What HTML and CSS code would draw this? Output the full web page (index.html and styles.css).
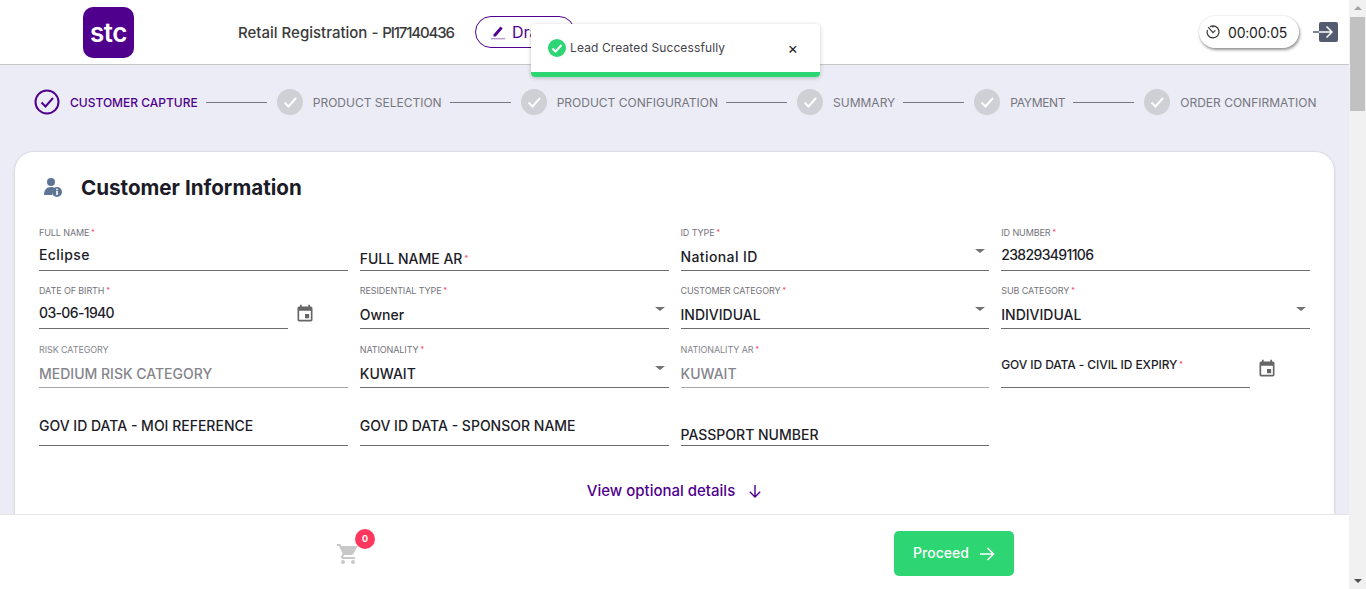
FILE: index.html
```html
<!DOCTYPE html>
<html lang="en">
<head>
<meta charset="utf-8">
<title>Retail Registration</title>
<link rel="stylesheet" href="styles.css">
</head>
<body>
<div class="app">
  <div class="main">
    <header class="header">
      <div class="logo">stc</div>
      <div class="title">Retail Registration - <span class="num-title">PI17140436</span></div>
      <div class="draft">
        <svg class="draft-icon" viewBox="0 0 16 16" width="16" height="16"><path d="M3.500 10.500 10.500 2.500l2.200 2-7 8H3.500z" fill="#4f008c"/><rect x="1" y="14" width="14" height="1.400" fill="#b79ad0"/></svg>
        <span>Draft</span>
      </div>
      <div class="spacer"></div>
      <div class="timer">
        <svg viewBox="0 0 16 16" width="16" height="16" fill="none" stroke="#333" stroke-width="1.200"><path d="M5 2.800A6 6 0 1 1 2.400 6"/><path d="M8 1.900V3.400M3.200 3.200 8 8.600l2.400-2.200"/></svg>
        <span>00:00:05</span>
      </div>
      <svg class="exit" viewBox="0 0 26 20" width="26" height="20"><rect x="6" y="0" width="19" height="20" rx="2" fill="#525c6e"/><path d="M6 10H19M13.500 4.500 19 10l-5.500 5.500" fill="none" stroke="#fff" stroke-width="1.500"/><path d="M0 10H6" stroke="#525c6e" stroke-width="1.500"/></svg>
    </header>

    <div class="content">
      <nav class="stepper">
        <div class="step active"><span class="ring"><svg viewBox="0 0 26 26" width="26" height="26"><circle cx="13" cy="13" r="11.500" fill="none" stroke="#4f008c" stroke-width="2"/><path d="M7.500 13.500l4 4 7.500-8.500" fill="none" stroke="#4f008c" stroke-width="2"/></svg></span><span class="step-label">CUSTOMER CAPTURE</span></div>
        <span class="line"></span>
        <div class="step"><span class="dot"><svg viewBox="0 0 26 26" width="26" height="26"><path d="M7.500 13.500l4 4 7.500-8.500" fill="none" stroke="#fff" stroke-width="2"/></svg></span><span class="step-label">PRODUCT SELECTION</span></div>
        <span class="line"></span>
        <div class="step"><span class="dot"><svg viewBox="0 0 26 26" width="26" height="26"><path d="M7.500 13.500l4 4 7.500-8.500" fill="none" stroke="#fff" stroke-width="2"/></svg></span><span class="step-label">PRODUCT CONFIGURATION</span></div>
        <span class="line"></span>
        <div class="step"><span class="dot"><svg viewBox="0 0 26 26" width="26" height="26"><path d="M7.500 13.500l4 4 7.500-8.500" fill="none" stroke="#fff" stroke-width="2"/></svg></span><span class="step-label">SUMMARY</span></div>
        <span class="line"></span>
        <div class="step"><span class="dot"><svg viewBox="0 0 26 26" width="26" height="26"><path d="M7.500 13.500l4 4 7.500-8.500" fill="none" stroke="#fff" stroke-width="2"/></svg></span><span class="step-label tight">PAYMENT</span></div>
        <span class="line"></span>
        <div class="step"><span class="dot"><svg viewBox="0 0 26 26" width="26" height="26"><path d="M7.500 13.500l4 4 7.500-8.500" fill="none" stroke="#fff" stroke-width="2"/></svg></span><span class="step-label">ORDER CONFIRMATION</span></div>
      </nav>

      <section class="card">
        <div class="card-head">
          <svg class="person" viewBox="0 0 20 20" width="20" height="20"><circle cx="8" cy="5" r="4" fill="#5d7495"/><path d="M1 18c0-5 2.500-8 7-8 2 0 3.500.6 4.500 1.500a5 5 0 0 0-3 6.500z" fill="#5d7495"/><circle cx="14" cy="15" r="5" fill="#5d7495"/><rect x="13.200" y="14" width="1.600" height="4" fill="#fff"/><rect x="13.200" y="11.700" width="1.600" height="1.500" fill="#fff"/></svg>
          <h2 class="card-title">Customer Information</h2>
        </div>
        <div class="form">
          <div class="field"><div class="label">FULL NAME<i>*</i></div><div class="box pad-input wide">Eclipse</div></div>
          <div class="field"><div class="box pad-float">FULL NAME AR<i class="req">*</i></div></div>
          <div class="field"><div class="label">ID TYPE<i>*</i></div><div class="box pad-select wide">National ID<b class="caret"></b></div></div>
          <div class="field"><div class="label">ID NUMBER<i>*</i></div><div class="box pad-input num">238293491106</div></div>

          <div class="field-date"><div class="field"><div class="label">DATE OF BIRTH<i>*</i></div><div class="box pad-input num">03-06-1940</div></div><svg class="cal cal-low" viewBox="0 0 24 24" width="20" height="20"><path d="M17 12h-5v5h5v-5zM16 1v2H8V1H6v2H5c-1.110 0-1.990.9-1.990 2L3 19c0 1.100.89 2 2 2h14c1.100 0 2-.9 2-2V5c0-1.100-.9-2-2-2h-1V1h-2zm3 18H5V8h14v11z" fill="#666"/></svg></div>
          <div class="field"><div class="label">RESIDENTIAL TYPE<i>*</i></div><div class="box pad-select">Owner<b class="caret"></b></div></div>
          <div class="field"><div class="label">CUSTOMER CATEGORY<i>*</i></div><div class="box pad-select">INDIVIDUAL<b class="caret"></b></div></div>
          <div class="field"><div class="label">SUB CATEGORY<i>*</i></div><div class="box pad-select">INDIVIDUAL<b class="caret"></b></div></div>

          <div class="field off"><div class="label">RISK CATEGORY</div><div class="box pad-select">MEDIUM RISK CATEGORY</div></div>
          <div class="field"><div class="label">NATIONALITY<i>*</i></div><div class="box pad-select">KUWAIT<b class="caret"></b></div></div>
          <div class="field off"><div class="label">NATIONALITY AR<i>*</i></div><div class="box pad-select">KUWAIT</div></div>
          <div class="field-date"><div class="field"><div class="box pad-high">GOV ID DATA - CIVIL ID EXPIRY<i class="req">*</i></div></div><svg class="cal cal-mid" viewBox="0 0 24 24" width="20" height="20"><path d="M17 12h-5v5h5v-5zM16 1v2H8V1H6v2H5c-1.110 0-1.990.9-1.990 2L3 19c0 1.100.89 2 2 2h14c1.100 0 2-.9 2-2V5c0-1.100-.9-2-2-2h-1V1h-2zm3 18H5V8h14v11z" fill="#666"/></svg></div>

          <div class="field"><div class="box pad-top">GOV ID DATA - MOI REFERENCE</div></div>
          <div class="field"><div class="box pad-top">GOV ID DATA - SPONSOR NAME</div></div>
          <div class="field"><div class="box pad-low">PASSPORT NUMBER</div></div>
        </div>
        <div class="more">View optional details
          <svg viewBox="0 0 14 14" width="14" height="14" fill="none" stroke="#4f008c" stroke-width="1.400"><path d="M7 1v12M1.800 7.800 7 13l5.200-5.200"/></svg>
        </div>
      </section>
    </div>

    <footer class="footer">
      <div class="cart">
        <svg viewBox="0 0 24 24" width="24" height="24"><path d="M7 18c-1.100 0-1.990.9-1.990 2S5.900 22 7 22s2-.9 2-2-.9-2-2-2zM1 2v2h2l3.600 7.590-1.350 2.450c-.16.28-.25.61-.25.96 0 1.100.9 2 2 2h12v-2H7.420c-.14 0-.25-.11-.25-.25l.03-.12.9-1.630h7.450c.75 0 1.410-.41 1.750-1.030L21.700 4H5.210l-.94-2H1zm16 16c-1.100 0-1.990.9-1.990 2s.89 2 1.990 2 2-.9 2-2-.9-2-2-2z" fill="#c8c8c8"/></svg>
        <span class="badge">0</span>
      </div>
      <button class="proceed"><span class="proceed-text">Proceed</span>
        <svg viewBox="0 0 16 16" width="16" height="16" fill="none" stroke="#fff" stroke-width="1.500"><path d="M1 8h13.500M8.500 2 14.500 8l-6 6"/></svg>
      </button>
    </footer>
  </div>

  <aside class="scrollbar">
    <span class="arrow-up"></span>
    <span class="thumb"></span>
    <span class="arrow-down"></span>
  </aside>

  <div class="toast">
    <div class="toast-body">
      <svg viewBox="0 0 18 18" width="18" height="18"><circle cx="9" cy="9" r="9" fill="#2ed573"/><path d="M4.500 9.500l3 3 6-6.500" fill="none" stroke="#fff" stroke-width="2"/></svg>
      <span class="toast-text">Lead Created Successfully</span>
      <span class="toast-close">×</span>
    </div>
    <div class="toast-bar"></div>
  </div>
</div>
</body>
</html>
```
FILE: styles.css
```css
* { box-sizing: border-box; }
html, body { margin: 0; height: 100%; overflow: hidden; }
body { font-family: Inter, "Liberation Sans", sans-serif; color: #1c1c28; background: #fff; }

.app { position: relative; display: flex; width: 1366px; height: 589px; overflow: hidden; }
.main { flex: 1; min-width: 0; display: flex; flex-direction: column; }

.header { height: 65px; flex: none; display: flex; align-items: center; padding-left: 83px; background: #fff; border-bottom: 1px solid #c6c6c6; }
.logo { width: 51px; height: 51px; border-radius: 10px; background: #4f008c; color: #fff; display: flex; align-items: center; justify-content: center; font-size: 26px; font-weight: 600; letter-spacing: -0.5px; }
.title { margin-left: 104px; width: 216px; font-size: 15px; font-weight: 500; color: #3a3a3a; white-space: nowrap; }
.num-title { letter-spacing: -1.15px; }
.draft { margin-left: 21px; width: 100px; height: 32px; border: 1px solid #4f008c; border-radius: 16px; display: flex; align-items: center; gap: 6px; padding-left: 14px; color: #4f008c; font-size: 16px; }
.spacer { flex: 1; }
.timer { width: 100px; height: 32px; border-radius: 16px; background: #fff; box-shadow: 1px 2px 3px rgba(0,0,0,.4), 0 0 2px rgba(0,0,0,.15); display: flex; align-items: center; gap: 7px; padding-left: 6px; font-size: 14px; letter-spacing: -0.2px; color: #222; margin-right: 14px; }
.exit { margin-right: 10px; }

.content { flex: 1; min-height: 0; overflow: hidden; background: #ebecf5; }

.stepper { display: flex; align-items: flex-start; padding: 24px 0 0 34px; height: 86px; }
.step { display: flex; align-items: center; gap: 10px; height: 26px; }
.ring, .dot { width: 26px; height: 26px; border-radius: 50%; display: block; flex: none; }
.dot { background: #cfd0d5; }
.step-label { font-size: 12px; color: #76767e; white-space: nowrap; }
.tight { letter-spacing: -0.3px; }
.active .step-label { color: #4f008c; font-weight: 500; }
.line { width: 61px; height: 1px; background: #76767e; margin: 13px 10px 0 8px; flex: none; }

.card { margin: 0 14px; padding: 0 24px; background: #fff; border: 1px solid #dcdde3; border-radius: 20px; box-shadow: 0 1px 3px rgba(0,0,0,.08); height: 400px; }
.card-head { display: flex; align-items: center; height: 60.8px; padding: 10px 0 0 4px; gap: 18px; }
.person { flex: none; }
.card-title { margin: 0; font-size: 20.6px; font-weight: 700; color: #1c1c28; }

.form { display: grid; grid-template-columns: repeat(4, 1fr); column-gap: 12px; grid-auto-rows: 58.33px; }
.field { display: flex; flex-direction: column; justify-content: flex-end; min-width: 0; flex: 1; height: 100%; }
.field-date { display: flex; align-items: flex-end; gap: 7px; }
.field-date .cal { flex: none; margin-right: 33px; }
.field-date .cal-low { margin-bottom: 5px; }
.field-date .cal-mid { margin-bottom: 9px; }
.label { font-size: 9px; color: #74747c; line-height: 12px; white-space: nowrap; letter-spacing: -0.1px; }
.label i, .req { color: #ff375e; font-style: normal; font-size: 7px; margin-left: 2px; vertical-align: top; }
.box { position: relative; font-size: 14px; line-height: 18px; color: #1c1c28; border-bottom: 1px solid #6f6f6f; white-space: nowrap; font-weight: 500; }
.wide { letter-spacing: 0.4px; }
.num { letter-spacing: -0.65px; }
.pad-input { padding: 7px 0 6px; }
.pad-select { padding: 9px 0 4px; }
.pad-float { padding: 0 0 2px; }
.pad-low { padding: 0 0 1px; }
.pad-top { padding: 0 0 10px; }
.pad-high { padding: 0 0 13px; font-size: 12px; letter-spacing: -0.1px; }
.off .box { color: #85858c; border-bottom-color: #a6a6a6; }
.off .label { color: #85858c; }
.caret { position: absolute; right: 4px; top: 10px; width: 0; height: 0; border-left: 5px solid transparent; border-right: 5px solid transparent; border-top: 4px solid #737373; }

.more { display: flex; justify-content: center; align-items: center; gap: 13px; margin-top: 35px; font-size: 15px; color: #4f008c; font-weight: 500; }

.footer { height: 75px; flex: none; display: flex; align-items: center; padding: 3px 0 0 336px; background: #fff; border-top: 1px solid #e6e6e6; position: relative; }
.cart { position: relative; width: 24px; height: 24px; }
.badge { position: absolute; left: 19px; top: -13px; width: 20px; height: 20px; border-radius: 50%; background: #ff375e; color: #fff; font-size: 9px; font-weight: 700; display: flex; align-items: center; justify-content: center; }
.proceed { margin-left: 534px; width: 120px; height: 45px; border: 0; border-radius: 5px; background: #2ed573; color: #fff; font: 500 14px Inter, sans-serif; display: flex; align-items: center; justify-content: center; gap: 10px; }
.proceed-text { position: relative; top: -1px; }

.scrollbar { width: 17px; flex: none; background: #f1f1f1; display: flex; flex-direction: column; align-items: center; }
.arrow-up { margin-top: 6px; border-left: 4px solid transparent; border-right: 4px solid transparent; border-bottom: 4px solid #a3a3a3; }
.thumb { width: 15px; height: 94px; margin-top: 7px; background: #c1c1c1; }
.arrow-down { margin-top: auto; margin-bottom: 6px; border-left: 4px solid transparent; border-right: 4px solid transparent; border-top: 4px solid #505050; }

.toast { position: absolute; left: 531px; top: 24px; width: 289px; height: 53px; background: #fff; border-radius: 4px; box-shadow: 0 1px 4px rgba(0,0,0,.22); display: flex; flex-direction: column; overflow: hidden; }
.toast-body { flex: 1; display: flex; align-items: center; padding: 0 0 1px 17px; gap: 4px; }
.toast-text { font-size: 12px; letter-spacing: 0.12px; color: #44444c; white-space: nowrap; }
.toast-close { margin-left: auto; margin-right: 22px; font-size: 16px; color: #222; line-height: 1; }
.toast-bar { height: 5px; background: #2ed573; flex: none; }
```
